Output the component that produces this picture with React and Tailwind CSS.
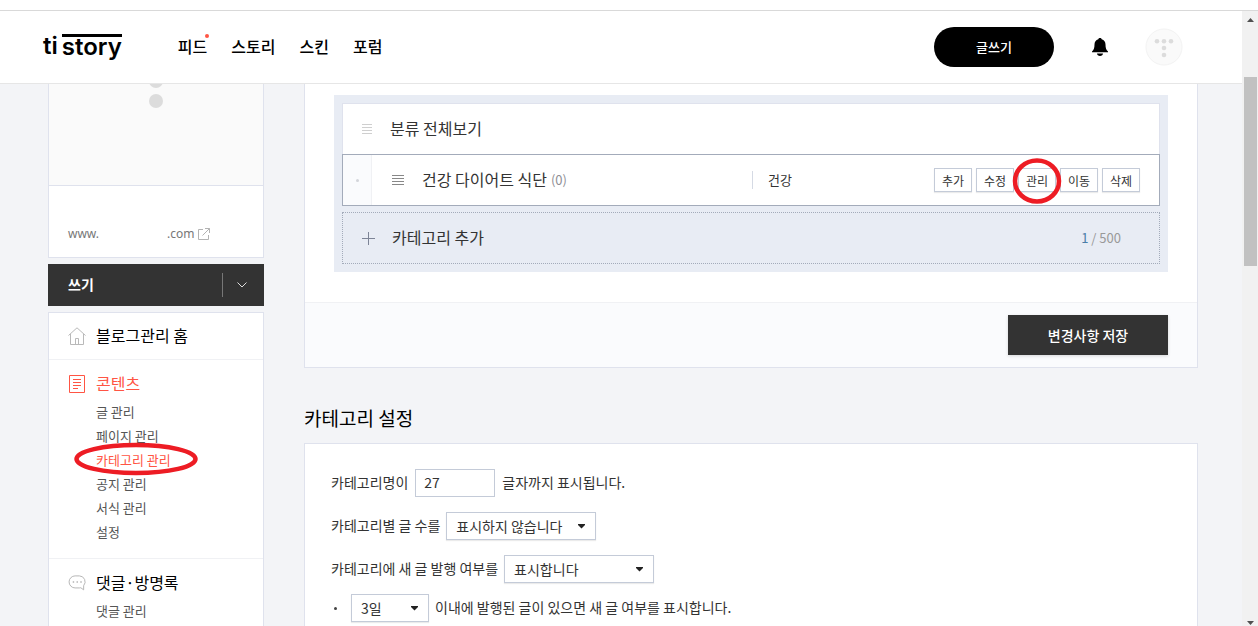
import { useState } from 'react'

const topMenu = [
  { label: '피드', isNew: true },
  { label: '스토리' },
  { label: '스킨' },
  { label: '포럼' },
]

const contentMenu = ['글 관리', '페이지 관리', '카테고리 관리', '공지 관리', '서식 관리', '설정']

const rowActions = ['추가', '수정', '관리', '이동', '삭제']

function BellIcon() {
  return (
    <svg width="16" height="18" viewBox="0 0 16 18" aria-hidden="true">
      <path d="M8 0c.9 0 1.500.5 1.700 1.200C12.200 2 13.500 4 13.500 6.500c0 3.500.7 5.500 2.500 7v.8H0v-.8c1.800-1.500 2.500-3.500 2.500-7C2.500 4 3.800 2 6.300 1.200 6.500.5 7.100 0 8 0z" />
      <path d="M5 15.500h6c0 1.500-1.300 2.500-3 2.500s-3-1-3-2.500z" />
    </svg>
  )
}

function AvatarIcon() {
  return (
    <svg width="38" height="38" viewBox="0 0 38 38" aria-hidden="true">
      <circle cx="19" cy="19" r="18" fill="#fafafa" stroke="#f3f3f3" />
      <g fill="#dcdcdc">
        <circle cx="12" cy="13.300" r="2.300" />
        <circle cx="19" cy="13.300" r="2.300" />
        <circle cx="26" cy="13.300" r="2.300" />
        <circle cx="19" cy="20" r="2.300" />
        <circle cx="19" cy="27" r="2.300" />
      </g>
    </svg>
  )
}

function HomeIcon() {
  return (
    <svg width="18" height="18" viewBox="0 0 18 18" fill="none" stroke="#b9b9b9" aria-hidden="true">
      <path d="M.5 8.500 9 .8l8.500 7.700M2.500 7v10.500h13V7M7.500 17.500v-6h3v6" />
    </svg>
  )
}

function ContentIcon() {
  return (
    <svg width="18" height="18" viewBox="0 0 18 18" fill="none" stroke="#ff5544" aria-hidden="true">
      <path d="M1.500.5h15v17h-15zM5 4.500h8M5 7.500h8M5 10.500h8M5 13.500h5" />
    </svg>
  )
}

function CommentIcon() {
  return (
    <svg width="19" height="18" viewBox="0 0 19 18" fill="none" stroke="#b3b3b3" aria-hidden="true">
      <path d="M7.500 1.500h4.500a6.200 6.200 0 0 1 4.500 10.300v4.400l-3-2.200c-.5.1-1 .2-1.500.2H7.500a6.350 6.350 0 0 1 0-12.700z" />
      <path strokeWidth="1.500" d="M5 8h1.500M9 8h1.500M13 8h1.500" />
    </svg>
  )
}

function ExternalIcon() {
  return (
    <svg width="12" height="12" viewBox="0 0 12 12" fill="none" stroke="#b3b3b3" aria-hidden="true">
      <path d="M5 1.500H.5v10h10V7M4.500 7.500l7-7M7 .5h4.500V5" />
    </svg>
  )
}

function HandleIcon({ width, color }) {
  return (
    <svg width={width} height="11" stroke={color} aria-hidden="true">
      <path d={`M0 .5h${width}M0 3.500h${width}M0 6.500h${width}M0 9.500h${width}`} />
    </svg>
  )
}

function Select({ id, label, className, options }) {
  return (
    <span className="relative flex">
      <select
        id={id}
        aria-label={label}
        className={`h-7 appearance-none border border-[#c4cbd8] bg-white pl-[9px] pr-6 text-sm text-[#333] shadow-[0_1px_1px_rgba(0,0,0,0.08)] ${className}`}
      >
        {options.map((option) => (
          <option key={option}>{option}</option>
        ))}
      </select>
      <svg width="7" height="5" className="pointer-events-none absolute right-[11px] top-3" aria-hidden="true">
        <path d="M0 0h7v1L3.500 4.500 0 1z" fill="#222" />
      </svg>
    </span>
  )
}

function Header() {
  return (
    <header className="flex h-[73px] shrink-0 items-center border-b border-[#e6e6e6] bg-white pl-[43px] pr-[59px]">
      <a href="#" className="flex pb-0.5 font-['Inter'] text-2xl font-semibold leading-6 text-black">
        <span>ti</span>
        <span className="ml-1 border-t-[3px] border-black leading-5">story</span>
      </a>
      <nav className="ml-14 flex gap-6 pb-0.5 text-base font-medium text-black">
        {topMenu.map((item) => (
          <a key={item.label} href="#" className="relative">
            {item.label}
            {item.isNew && <span className="absolute -right-0.5 top-0 size-1 rounded-full bg-[#ff5544]" />}
          </a>
        ))}
      </nav>
      <div className="ml-auto flex items-center">
        <button type="button" className="h-10 w-[120px] rounded-full bg-black text-[13px] font-medium text-white">
          글쓰기
        </button>
        <button type="button" aria-label="알림" className="ml-[38px]">
          <BellIcon />
        </button>
        <button type="button" aria-label="프로필" className="ml-[37px]">
          <AvatarIcon />
        </button>
      </div>
    </header>
  )
}

function MenuTitle({ icon, active, children }) {
  return (
    <a
      href="#"
      className={`flex h-6 items-center gap-2.5 text-base ${active ? 'text-[#ff5544]' : 'text-black'}`}
    >
      <span className="flex w-[18px]">{icon}</span>
      <span className="pb-0.5">{children}</span>
    </a>
  )
}

function Sidebar() {
  return (
    <aside className="flex w-[216px] shrink-0 flex-col gap-1.5">
      <div className="shrink-0 border border-t-0 border-[#dfe2ed] bg-white">
        <div className="flex h-[102px] justify-center border-b border-[#dfe2ed] bg-[#fafafa]">
          <svg width="14" height="30" fill="#dcdcdc" aria-hidden="true">
            <circle cx="7" cy="-3" r="7" />
            <circle cx="7" cy="17" r="7" />
          </svg>
        </div>
        <a href="#" className="flex h-[71px] items-center px-[19px] pt-6 font-['Noto_Sans'] text-xs text-[#777]">
          <span className="w-[99px]">www.</span>
          <span className="mr-1">.com</span>
          <ExternalIcon />
        </a>
      </div>

      <div className="flex h-[42px] shrink-0 items-center bg-[#333] text-white">
        <button type="button" className="flex-1 pb-0.5 pl-5 text-left text-sm font-bold">
          쓰기
        </button>
        <button type="button" aria-label="더보기" className="flex h-6 w-[42px] items-center border-l border-[#777] pl-3.5">
          <svg width="10" height="6" fill="none" stroke="#ddd" aria-hidden="true">
            <path d="M.5.5 5 5 9.500.5" />
          </svg>
        </button>
      </div>

      <nav className="shrink-0 border border-[#dfe2ed] bg-white">
        <div className="border-b border-[#f0f1f4] px-[19px] py-[11px]">
          <MenuTitle icon={<HomeIcon />}>블로그관리 홈</MenuTitle>
        </div>
        <div className="border-b border-[#f0f1f4] px-[19px] pb-3.5 pt-3">
          <MenuTitle icon={<ContentIcon />} active>콘텐츠</MenuTitle>
          <ul className="mt-1 pl-7 text-[13px] leading-6 text-[#555]">
            {contentMenu.map((item) => (
              <li key={item}>
                {item === '카테고리 관리' ? (
                  <a href="#" className="relative inline-block text-[#ff5544]">
                    {item}
                    <svg width="124" height="34" className="pointer-events-none absolute -left-[22px] -top-[6px] max-w-none" fill="none" aria-hidden="true">
                      <ellipse cx="62" cy="17" rx="59.500" ry="14" stroke="#ed1c24" strokeWidth="4.500" />
                    </svg>
                  </a>
                ) : (
                  <a href="#">{item}</a>
                )}
              </li>
            ))}
          </ul>
        </div>
        <div className="px-[19px] pb-3.5 pt-3">
          <MenuTitle icon={<CommentIcon />}>댓글·방명록</MenuTitle>
          <ul className="mt-1 pl-7 text-[13px] leading-6 text-[#555]">
            <li><a href="#">댓글 관리</a></li>
          </ul>
        </div>
      </nav>
    </aside>
  )
}

function CategoryPanel() {
  return (
    <section className="border border-t-0 border-[#dfe2ed] bg-white">
      <div className="px-[29px] pb-[30px] pt-[11px]">
        <div className="bg-[#e8ecf4] p-2 text-base text-[#333]">
          <div className="flex h-[51px] items-center border border-b-0 border-[#dfe2ed] bg-white pl-[19px]">
            <HandleIcon width={10} color="#cfcfcf" />
            <span className="ml-[18px] pb-0.5">분류 전체보기</span>
          </div>

          <div className="flex h-[52px] items-center border border-[#a3abba] bg-white pr-[19px]">
            <div className="flex h-full w-[29px] items-center justify-center border-r border-[#f0f1f4] bg-[#fafbfd]">
              <span className="size-[3px] rounded-full bg-[#d3d5da]" />
            </div>
            <div className="flex flex-1 items-center pl-5">
              <HandleIcon width={12} color="#888" />
              <span className="ml-[18px] pb-0.5">건강 다이어트 식단</span>
              <span className="ml-1 text-[13px] text-[#8f8f96]">(0)</span>
            </div>
            <div className="flex w-[388px] items-center">
              <span className="flex h-[18px] items-center border-l border-[#d5dae4] pl-[15px] text-[13px]">건강</span>
              <div className="ml-auto flex gap-1">
                {rowActions.map((action) => (
                  <button
                    key={action}
                    type="button"
                    className="relative h-6 w-[38px] border border-[#c4cbd8] bg-white pt-px text-xs shadow-[0_1px_1px_rgba(0,0,0,0.08)]"
                  >
                    {action}
                    {action === '관리' && (
                      <svg width="50" height="48" className="pointer-events-none absolute -left-[7px] -top-[12px] z-10 max-w-none" fill="none" aria-hidden="true">
                        <ellipse cx="25" cy="24" rx="22" ry="20.500" stroke="#ed1c24" strokeWidth="4.500" />
                      </svg>
                    )}
                  </button>
                ))}
              </div>
            </div>
          </div>

          <div className="mt-1.5 flex h-[52px] items-center border border-dotted border-[#a3abba] pl-[19px] pr-[38px]">
            <button type="button" className="flex items-center gap-[17px]">
              <svg width="13" height="13" stroke="#7d8496" aria-hidden="true">
                <path d="M0 6.500h13M6.500 0v13" />
              </svg>
              <span className="pb-0.5">카테고리 추가</span>
            </button>
            <span className="ml-auto text-[13px] text-[#999]">
              <span className="text-[#4a7ea8]">1</span> / 500
            </span>
          </div>
        </div>
      </div>

      <div className="flex justify-end border-t border-[#f0f1f4] bg-[#fafbfd] px-[29px] py-3">
        <button type="button" className="h-10 w-40 bg-[#333] text-sm font-medium text-white shadow-[0_1px_3px_rgba(0,0,0,0.15)]">
          변경사항 저장
        </button>
      </div>
    </section>
  )
}

function SettingsPanel() {
  const [nameLength, setNameLength] = useState('27')

  return (
    <section className="mt-9">
      <h2 className="text-[19px] leading-7 text-black">카테고리 설정</h2>
      <div className="mt-[11px] border border-[#dfe2ed] bg-white px-[26px] py-[25px] text-sm text-[#333]">
        <div className="flex h-7 items-center gap-[7px]">
          <label htmlFor="name-length" className="pb-0.5">카테고리명이</label>
          <input
            id="name-length"
            type="text"
            value={nameLength}
            onChange={(e) => setNameLength(e.target.value)}
            className="h-7 w-20 border border-[#c4cbd8] px-2 pb-0.5"
          />
          <span className="pb-0.5">글자까지 표시됩니다.</span>
        </div>
        <div className="mt-[15px] flex h-7 items-center gap-1.5">
          <label htmlFor="post-count" className="pb-0.5">카테고리별 글 수를</label>
          <Select id="post-count" className="w-[150px]" options={['표시하지 않습니다', '표시합니다']} />
        </div>
        <div className="mt-[15px] flex h-7 items-center gap-1.5">
          <label htmlFor="new-post" className="pb-0.5">카테고리에 새 글 발행 여부를</label>
          <Select id="new-post" className="w-[150px]" options={['표시합니다', '표시하지 않습니다']} />
        </div>
        <div className="mt-[11px] flex h-7 items-center gap-1.5">
          <span className="ml-[3px] mr-2 size-[3px] rounded-full bg-[#444]" />
          <Select id="new-days" label="새 글 기간" className="w-[78px]" options={['3일', '1일', '2일']} />
          <label htmlFor="new-days" className="pb-0.5">이내에 발행된 글이 있으면 새 글 여부를 표시합니다.</label>
        </div>
      </div>
    </section>
  )
}

function ScrollTrack() {
  return (
    <div className="flex w-4 shrink-0 flex-col items-center bg-[#f1f1f1]" aria-hidden="true">
      <svg width="7" height="4" className="mt-[7px] shrink-0">
        <path d="M3.500 0 7 4H0z" fill="#505050" />
      </svg>
      <div className="mt-[55px] h-[189px] w-[13px] shrink-0 bg-[#c1c1c1]" />
      <svg width="7" height="4" className="mb-px mt-auto shrink-0">
        <path d="M3.500 4 7 0H0z" fill="#505050" />
      </svg>
    </div>
  )
}

export default function App() {
  return (
    <div className="flex h-screen flex-col overflow-hidden bg-white pt-2.5 font-['Noto_Sans_CJK_KR',sans-serif]">
      <div className="flex min-h-0 flex-1 border-t border-[#d9d9d9]">
        <div className="flex min-w-0 flex-1 flex-col">
          <Header />
          <div className="flex min-h-0 flex-1 gap-10 overflow-hidden bg-[#f3f4f7] pl-12 pr-11">
            <Sidebar />
            <main className="min-w-0 flex-1">
              <CategoryPanel />
              <SettingsPanel />
            </main>
          </div>
        </div>
        <ScrollTrack />
      </div>
    </div>
  )
}
